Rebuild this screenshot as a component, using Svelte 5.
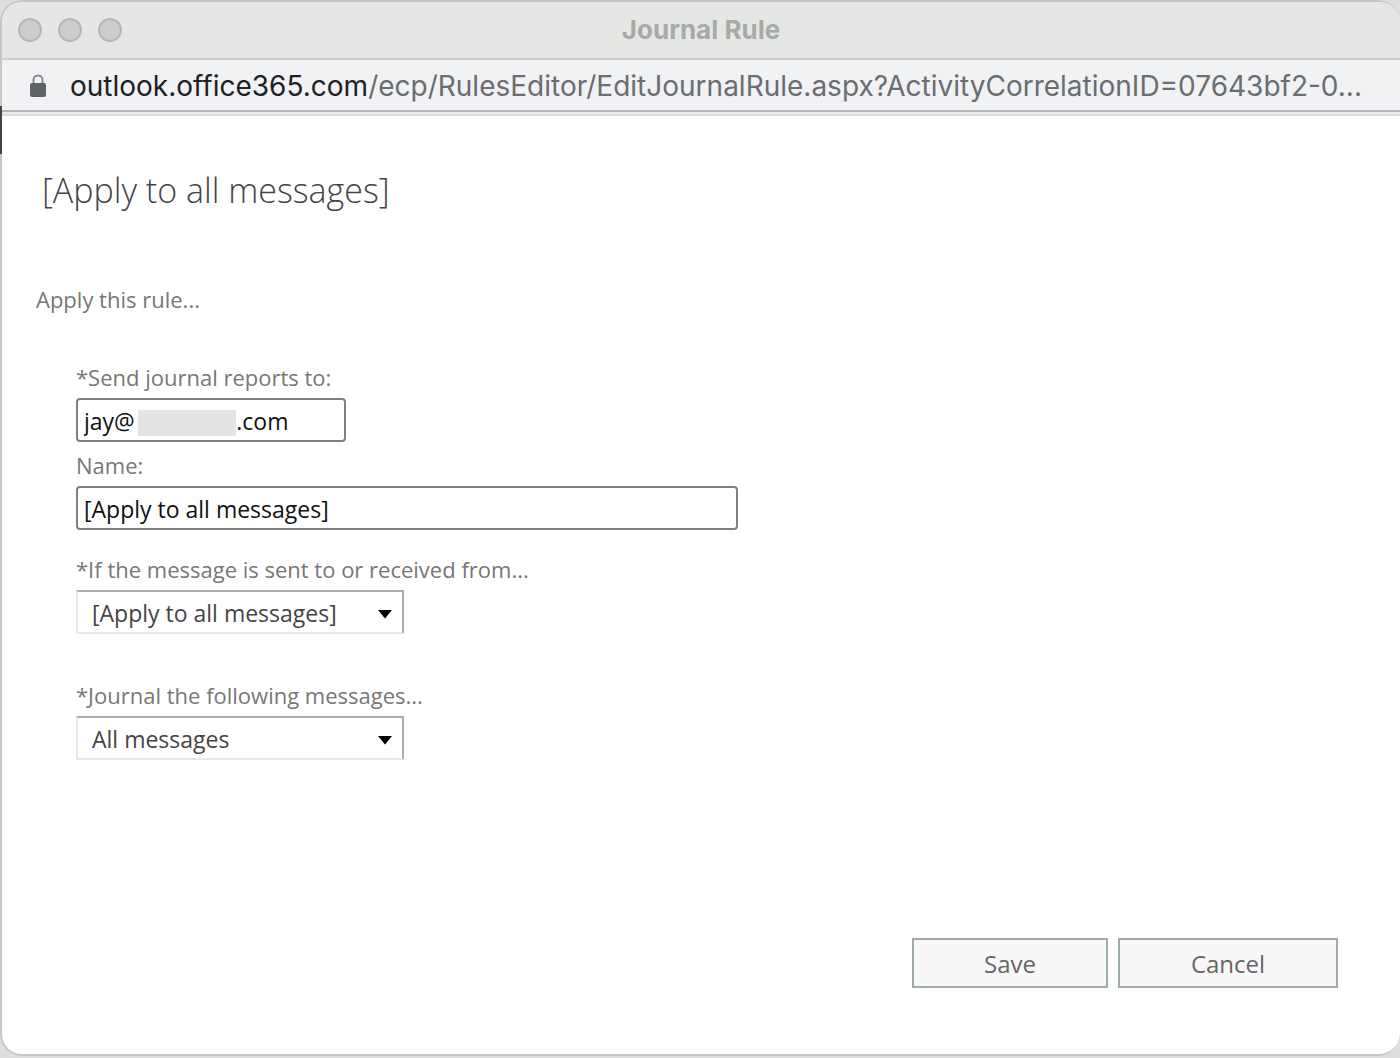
<script>
  let recipient = $state('jay@\u00a0\u00a0\u00a0\u00a0\u00a0\u00a0\u00a0\u00a0\u00a0\u00a0\u00a0\u00a0\u00a0\u00a0\u00a0\u00a0\u00a0.com');
  let name = $state('[Apply to all messages]');
  let scope = $state('all');
  let kind = $state('all');
</script>

<div class="desktop">
  <span class="behind"></span>
  <div class="window">
    <header class="titlebar">
      <div class="lights">
        <button aria-label="Close window"></button>
        <button aria-label="Minimize window"></button>
        <button aria-label="Zoom window"></button>
      </div>
      <span class="title">Journal Rule</span>
    </header>

    <div class="address">
      <svg class="lock" viewBox="0 0 16 24" aria-hidden="true">
        <path d="M3.500 10V6a4.500 4.500 0 0 1 9 0v4" fill="none" stroke="#85888c" stroke-width="2" />
        <rect x="0" y="9" width="16" height="14" rx="2" fill="#5f6368" />
      </svg>
      <span class="url"><span class="host">outlook.office365.com</span>/ecp/RulesEditor/EditJournalRule.aspx?ActivityCorrelationID=07643bf2-0...</span>
    </div>

    <main>
      <h1>[Apply to all messages]</h1>
      <p class="intro">Apply this rule...</p>

      <form id="rule" onsubmit={(e) => e.preventDefault()}>
        <div class="field">
          <label for="recipient">*Send journal reports to:</label>
          <div class="control short">
            <input id="recipient" type="text" bind:value={recipient} />
            <span class="redaction"></span>
          </div>
        </div>
        <div class="field name">
          <label for="name">Name:</label>
          <div class="control long">
            <input id="name" type="text" bind:value={name} />
          </div>
        </div>
        <div class="field scope">
          <label for="scope">*If the message is sent to or received from...</label>
          <div class="control pick">
            <select id="scope" bind:value={scope}>
              <option value="all">[Apply to all messages]</option>
            </select>
            <svg class="arrow" viewBox="0 0 16 9" aria-hidden="true"><path d="M1 0h14L8 8.500z" /></svg>
          </div>
        </div>
        <div class="field">
          <label for="kind">*Journal the following messages...</label>
          <div class="control pick">
            <select id="kind" bind:value={kind}>
              <option value="all">All messages</option>
            </select>
            <svg class="arrow" viewBox="0 0 16 9" aria-hidden="true"><path d="M1 0h14L8 8.500z" /></svg>
          </div>
        </div>
      </form>

      <footer>
        <button class="save" type="submit" form="rule">Save</button>
        <button class="cancel" type="button">Cancel</button>
      </footer>
    </main>
  </div>
</div>

<style>
  :global(body) {
    margin: 0;
  }
  .desktop,
  .desktop * {
    box-sizing: border-box;
  }
  .desktop {
    position: relative;
    display: flex;
    min-height: 100vh;
    padding-bottom: 2px;
    background: #dedede;
    font-family: 'Open Sans', 'Noto Sans', sans-serif;
    font-size: 22px;
    line-height: 30px;
    overflow: hidden;
  }
  .behind {
    position: absolute;
    left: 0;
    top: 106px;
    width: 2px;
    height: 48px;
    background: #444;
    z-index: 1;
  }
  .window {
    flex: 1;
    min-width: 0;
    display: flex;
    flex-direction: column;
    border: 2px solid #c6c7c6;
    border-right: 0;
    border-radius: 22px;
    background: #fff;
    overflow: hidden;
  }
  .titlebar {
    display: grid;
    grid-template-columns: 1fr auto 1fr;
    align-items: center;
    height: 58px;
    padding: 0 16px;
    background: #e5e7e5;
    border-bottom: 2px solid #cccdce;
  }
  .lights {
    display: flex;
    gap: 16px;
  }
  .lights button {
    width: 24px;
    height: 24px;
    padding: 0;
    border: 2px solid #b5b7b5;
    border-radius: 50%;
    background: #cbcdcb;
  }
  .title {
    font-family: Inter, sans-serif;
    font-size: 26px;
    font-weight: 700;
    color: #a8aaa8;
  }
  .address {
    display: flex;
    align-items: center;
    gap: 24px;
    height: 56px;
    padding: 0 28px 2px;
    background: #f1f2f4;
    border-bottom: 2px solid #d9dbdf;
    box-shadow: inset 0 -2px #e9ebed, inset 0 -4px #b4b6b9;
  }
  .lock {
    flex: none;
    width: 16px;
    height: 24px;
  }
  .url {
    min-width: 0;
    overflow: hidden;
    white-space: nowrap;
    font-family: Inter, sans-serif;
    font-size: 28px;
    line-height: 36px;
    color: #6b6d70;
  }
  .host {
    color: #202124;
  }
  main {
    flex: 1;
    display: flex;
    flex-direction: column;
    padding: 54px 62px 66px 34px;
    color: #777;
  }
  h1 {
    margin: 0 6px;
    font-size: 34px;
    font-weight: 300;
    line-height: 40px;
    color: #444;
  }
  .intro {
    margin: 74px 0 0;
  }
  form {
    flex: 1;
    margin: 48px 0 0 40px;
  }
  label {
    display: block;
    height: 36px;
  }
  .control {
    position: relative;
    max-width: 100%;
    height: 44px;
  }
  .short {
    width: 270px;
  }
  .long {
    width: 662px;
  }
  .pick {
    width: 328px;
  }
  input,
  select {
    width: 100%;
    height: 100%;
    margin: 0;
    font: inherit;
    font-size: 23px;
    background: #fff;
  }
  input {
    padding: 2px 6px 0;
    border: 2px solid #808080;
    border-radius: 4px;
    color: #111;
  }
  select {
    appearance: none;
    padding: 2px 40px 0 14px;
    border: 2px solid;
    border-color: #ababb3 #ababb3 #e3e9f3 #e3e9f3;
    border-radius: 0;
    color: #444;
  }
  .redaction {
    position: absolute;
    left: 62px;
    top: 12px;
    width: 98px;
    height: 26px;
    background: #e4e4e4;
  }
  .arrow {
    position: absolute;
    right: 11px;
    top: 20px;
    width: 16px;
    height: 9px;
    fill: #000;
    pointer-events: none;
  }
  .name {
    margin-top: 8px;
  }
  .scope {
    margin: 24px 0 46px;
  }
  footer {
    display: flex;
    justify-content: flex-end;
    gap: 10px;
  }
  footer button {
    height: 50px;
    padding: 2px 0 0;
    border: 2px solid #9eabad;
    background: #f8f8f8;
    font: inherit;
    font-size: 24px;
    color: #666;
  }
  .save {
    width: 196px;
  }
  .cancel {
    width: 220px;
  }
</style>
